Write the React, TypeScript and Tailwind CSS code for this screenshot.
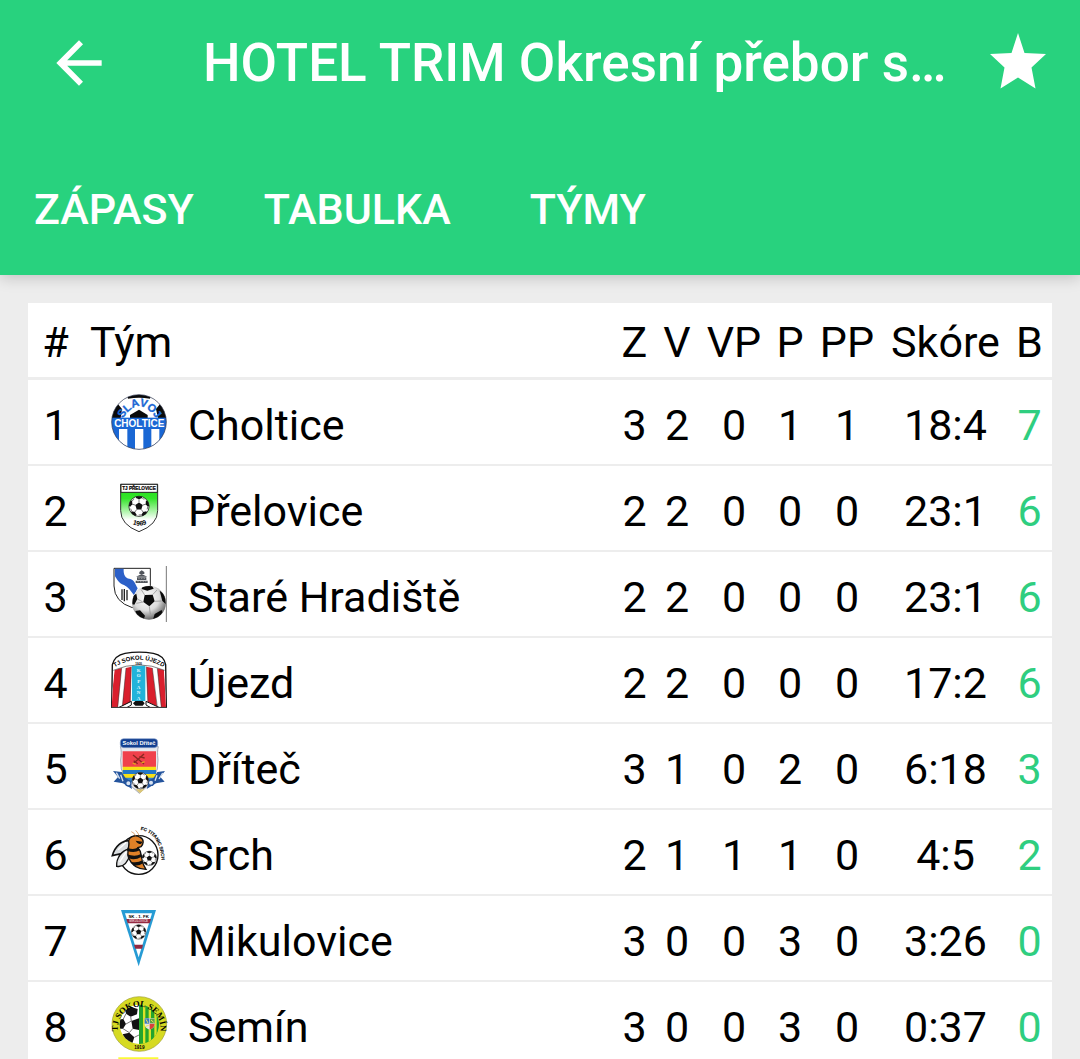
import type { ReactNode } from "react";

const angles = [0, 72, 144, 216, 288];

function Ball({ cx, cy, r }: { cx: number; cy: number; r: number }) {
  return (
    <g transform={`translate(${cx} ${cy}) scale(${r / 100})`}>
      <circle r="98" fill="#fff" stroke="#111" strokeWidth="7" />
      <path d="M0 -38 L36 -12 L22 31 L-22 31 L-36 -12 Z" fill="#111" />
      {angles.map((a) => (
        <g key={a} transform={`rotate(${a})`}>
          <path d="M0 -38 V-68" stroke="#333" strokeWidth="6" />
          <path d="M0 -68 L30 -80 L27 -95 Q0 -102 -27 -95 L-30 -80 Z" fill="#111" />
          <path d="M30 -80 L52 -66" stroke="#333" strokeWidth="6" />
        </g>
      ))}
    </g>
  );
}

function Crest({ viewBox, name, children }: { viewBox: string; name: string; children: ReactNode }) {
  return (
    <svg viewBox={viewBox} role="img" aria-label={name} className="block size-14 overflow-visible font-['Liberation_Sans',sans-serif] font-bold">
      {children}
    </svg>
  );
}

const choltice = (
  <Crest viewBox="33 27 168 168" name="Slavoj Choltice">
    <defs>
      <clipPath id="ch-c"><circle cx="117" cy="111" r="82" /></clipPath>
      <path id="ch-arc" d="M66 104 Q118 24 171 104" />
    </defs>
    <g clipPath="url(#ch-c)">
      <rect x="33" y="27" width="168" height="168" fill="#fff" />
      <path d="M80 24 H154 L150 41 Q117 35 84 41 Z M33 60 L52 55 L66 72 L62 100 H33 Z M201 60 L182 55 L168 72 L174 100 H201 Z" fill="#0a0a0a" />
      <path d="M117 74 L143 90 V104 H90 V90 Z" fill="#0a0a0a" />
      <rect x="33" y="98" width="168" height="97" fill="#1a67d4" />
      <path d="M57 132 H82 V200 H57 Z M105 132 H130 V200 H105 Z M154 132 H178 V200 H154 Z" fill="#fff" />
    </g>
    <circle cx="117" cy="111" r="82" fill="none" stroke="#27304a" strokeWidth="2" />
    <text fontSize="33" fill="#1a67d4" stroke="#1a67d4" strokeWidth="1"><textPath href="#ch-arc" startOffset="50%" textAnchor="middle">SLAVOJ</textPath></text>
    <text x="118" y="127" fontSize="30" fill="#fff" textAnchor="middle">CHOLTICE</text>
  </Crest>
);

const prelovice = (
  <Crest viewBox="33 24 168 168" name="TJ Přelovice">
    <defs>
      <linearGradient id="pr-g" x1="0" x2="0" y1="0" y2="1">
        <stop offset="0" stopColor="#1fdc16" />
        <stop offset=".3" stopColor="#35e52b" />
        <stop offset=".75" stopColor="#fff" />
      </linearGradient>
      <path id="pr-arc" d="M88 152 Q117 170 150 151" />
    </defs>
    <path d="M62 37 H173 V116 Q173 158 117 179 Q62 158 62 116 Z" fill="url(#pr-g)" stroke="#333" strokeWidth="3" />
    <rect x="63" y="37" width="109" height="24" fill="#fff" stroke="#222" strokeWidth="3" />
    <text x="117" y="55" fontSize="14" textAnchor="middle" stroke="#000" strokeWidth=".6">TJ PŘELOVICE</text>
    <Ball cx={117} cy={103} r={31} />
    <text fontSize="20"><textPath href="#pr-arc" startOffset="50%" textAnchor="middle">1969</textPath></text>
  </Crest>
);

const hradiste = (
  <Crest viewBox="33 24 168 168" name="Staré Hradiště">
    <defs>
      <radialGradient id="hr-g" cx=".42" cy=".35" r=".7">
        <stop offset="0" stopColor="#fff" />
        <stop offset=".55" stopColor="#dcdcdc" />
        <stop offset="1" stopColor="#555" />
      </radialGradient>
      <clipPath id="hr-c"><circle cx="147" cy="134" r="50" /></clipPath>
    </defs>
    <path d="M42 31 H151 V100 L97 149 Q43 132 42 84 Z" fill="#fff" stroke="#222" strokeWidth="3" />
    <path d="M45 32 H71 C70 50 76 60 88 62 C103 65 106 78 113 91 L102 112 C92 98 84 86 72 81 C55 76 50 61 45 55 Z" fill="#2c60c8" />
    <path d="M66 94 V126 M73 93 V130 M81 96 V127" stroke="#222" strokeWidth="4" />
    <path d="M107 68 H143 V75 H107 Z M111 58 H139 V66 H111 Z M108 56 L125 48 L142 56 Z M118 42 L125 37 L133 42 V48 H118 Z" fill="#50545b" />
    <path d="M115 61 H136 M112 71 H139" stroke="#bbb" strokeWidth="2" strokeDasharray="4 4" />
    <circle cx="147" cy="134" r="51" fill="url(#hr-g)" />
    <g clipPath="url(#hr-c)" fill="#0b0b0b">
      <path d="M134 111 L158 110 L164 130 L148 145 L130 132 Z" />
      <path d="M127 84 L156 83 L161 92 L142 98 L125 93 Z M179 98 L198 112 V139 L187 129 Z M95 115 L109 107 L112 123 L103 140 L96 139 Z M106 159 L120 157 L135 173 L130 187 L112 177 Z M164 168 L185 156 L188 165 L172 182 L159 184 Z" />
      <path d="M134 111 L123 94 M158 110 L171 96 M164 130 L184 129 M148 145 L151 169 M130 132 L109 136 M112 123 L127 131" fill="none" stroke="#888" strokeWidth="2" />
    </g>
    <path d="M199 24 V192" stroke="#777" strokeWidth="3" />
  </Crest>
);

const ujezd = (
  <Crest viewBox="33 24 168 168" name="TJ Sokol Újezd">
    <defs>
      <path id="uj-arc" d="M38 74 Q117 20 196 74" />
      <clipPath id="uj-c"><path d="M42 78 Q117 46 192 78 L198 190 H35 Z" /></clipPath>
    </defs>
    <path d="M35 190 L37 62 Q44 34 75 28 Q117 21 160 28 Q192 34 197 62 L199 190 Z" fill="#fff" stroke="#111" strokeWidth="4" />
    <g clipPath="url(#uj-c)">
      <rect x="33" y="50" width="168" height="145" fill="#fff" />
      <path d="M44 78 L65 72 L53 195 H30 Z M78 72 L94 68 L91 195 H66 Z M139 68 L157 72 L172 195 H144 Z M172 73 L192 78 L204 195 H184 Z" fill="#d91f2d" />
      <path d="M96 65 H136 V172 H96 Z" fill="#22b3da" />
      <path d="M65 72 L53 190 M78 72 L67 190 M94 68 L90 180 M139 68 L144 180 M157 72 L172 190 M172 73 L184 190" stroke="#333" strokeWidth="1.5" />
      <path d="M56 192 L96 171 H137 L182 192 Z" fill="#fff" />
      <path d="M53 192 L94 172 V183 L80 191 M181 192 L138 172 V183 L152 191" fill="none" stroke="#111" strokeWidth="3" />
      <path d="M99 178 L106 171 H128 L134 178 L128 185 H106 Z" fill="#111" />
    </g>
    <path d="M40 79 Q117 46 194 79" fill="none" stroke="#444" strokeWidth="2" />
    <text fontSize="18"><textPath href="#uj-arc" startOffset="50%" textAnchor="middle">TJ SOKOL ÚJEZD</textPath></text>
    <text x="116" y="62" fontSize="9" textAnchor="middle">1930</text>
    {["K", "O", "P", "A", "N", "A"].map((c, i) => (
      <text key={i} x="116" y={83 + i * 17} fontSize="15" textAnchor="middle" fill="#e4f8ff" className="font-['Liberation_Serif',serif]">{c}</text>
    ))}
    <path d="M33 190 H201" stroke="#555" strokeWidth="2" />
  </Crest>
);

const dritec = (
  <Crest viewBox="33 24 168 168" name="Sokol Dříteč">
    <path d="M61 50 H175 Q171 63 174 90 Q178 145 118 190 Q58 145 62 90 Q66 63 61 50 Z" fill="#e8e9ed" stroke="#a9adb8" strokeWidth="3" />
    <path d="M68 64 H168 V111 H68 Z" fill="#f0414b" />
    <path d="M68 110 H168 V143 Q164 151 158 156 H78 Q70 149 68 141 Z" fill="#f8e018" />
    <path d="M68 120 H168 V132 H68 Z" fill="#2278c9" />
    <path d="M72 143 H164 L151 157 H84 Z" fill="#3181c9" />
    <rect x="61" y="26" width="112" height="27" rx="10" fill="#123f91" stroke="#8aa1cc" strokeWidth="2" />
    <text x="117" y="46" fontSize="17" textAnchor="middle" fill="#fff">Sokol Dříteč</text>
    <path d="M99 75 L132 102 M132 72 L101 100 M118 80 L134 84 M101 92 L113 101" stroke="#8b2821" strokeWidth="4" />
    <path d="M124 99 L134 95 M98 99 L107 103" stroke="#e3a91d" strokeWidth="4" />
    <path d="M39 123 L65 126 L76 143 L91 153 L96 177 L69 160 L41 155 L54 141 Z M195 123 L172 126 L161 143 L147 153 L140 177 L168 160 L194 155 L181 141 Z" fill="#24549d" />
    <path d="M49 128 L59 146 M62 134 L69 154 M188 129 L177 147 M171 136 L165 152" stroke="#d5e0ee" strokeWidth="4" />
    <circle cx="85" cy="160" r="8" fill="#d8e3f2" stroke="#24549d" strokeWidth="4" />
    <circle cx="153" cy="158" r="8" fill="#d8e3f2" stroke="#24549d" strokeWidth="4" />
    <path d="M107 178 L120 190 L133 178 Z" fill="#dcc675" />
    <Ball cx={121} cy={152} r={25} />
  </Crest>
);

const srch = (
  <Crest viewBox="33 24 168 168" name="FC Titanic Srch">
    <defs><path id="sr-arc" d="M121 42 Q185 52 185 150" /></defs>
    <circle cx="116" cy="117" r="58" fill="#fff" stroke="#111" strokeWidth="4" />
    <text fontSize="14" stroke="#111" strokeWidth=".4"><textPath href="#sr-arc">FC TITANIC SRCH</textPath></text>
    <path d="M91 74 C66 72 45 91 37 119 L82 109 Z" fill="#d9dde0" stroke="#111" strokeWidth="5" />
    <path d="M86 99 C66 104 48 126 50 151 C71 155 84 136 90 116 Z" fill="#e3e5e6" stroke="#111" strokeWidth="4" />
    <path d="M79 79 L54 101 M79 107 L59 138" stroke="#fff" strokeWidth="4" />
    <path d="M86 75 C88 61 105 55 121 64 C134 72 130 85 123 92 L114 95 C128 110 121 121 127 132 Q128 146 138 160 C113 159 95 148 86 126 C78 107 91 92 86 75 Z" fill="#df8027" stroke="#111" strokeWidth="4" />
    <path d="M107 74 L128 77 L123 84 Q112 84 107 74 Z M84 96 Q101 103 115 94 L120 103 Q101 113 81 104 Z M81 115 Q106 124 123 114 L125 122 Q104 134 87 127 Z M92 137 Q112 142 128 132 L131 141 Q119 150 101 149 Z" fill="#111" />
    <path d="M107 61 Q104 50 94 47 M118 61 Q115 51 107 43" fill="none" stroke="#cc7a31" strokeWidth="2" />
    <Ball cx={148} cy={127} r={22} />
  </Crest>
);

const mikulovice = (
  <Crest viewBox="33 24 168 168" name="SK-1.FK Mikulovice">
    <path d="M63 24 H168 L116 193 Z" fill="#269bd4" />
    <path d="M75 34 H156 L116 166 Z" fill="#fff" />
    <path d="M79 51 H153 L149 64 H83 Z M102 128 H129 L126 140 H106 Z" fill="#932941" />
    <text x="116" y="48" fontSize="13" textAnchor="middle">SK - 1. FK</text>
    <text x="116" y="61" fontSize="9" textAnchor="middle" fill="#e6c6cd">MIKULOVICE</text>
    <Ball cx={116} cy={90} r={22} />
  </Crest>
);

const semin = (
  <Crest viewBox="33 36 168 168" name="TJ Sokol Semín">
    <defs>
      <path id="se-arc" d="M55 146 A64 64 0 1 1 180 146" />
      <clipPath id="se-c"><circle cx="118" cy="121" r="59" /></clipPath>
    </defs>
    <circle cx="118" cy="120" r="82" fill="#d6da22" stroke="#9e9e32" strokeWidth="2" />
    <g clipPath="url(#se-c)">
      <rect x="58" y="60" width="60" height="122" fill="#fff" />
      <path d="M76 76 L91 68 L113 75 L111 91 L92 98 L78 89 Z M56 107 L70 105 L78 120 L69 134 H56 Z M94 111 L117 103 V138 L98 134 Z M68 151 L88 146 L103 160 L97 178 L78 175 Z" fill="#111" />
      <path d="M92 98 L94 111 L78 120 M98 134 L88 146 L69 134 M78 89 L70 105 M103 160 L117 153" fill="none" stroke="#777" strokeWidth="3" />
      <path d="M117 60 H180 V182 H117 Z" fill="#23a42d" />
      <path d="M129 60 H136 V182 H129 Z M146 60 H153 V182 H146 Z M163 60 H170 V182 H163 Z" fill="#dae229" />
    </g>
    <path d="M134 103 H164 V122 Q163 132 149 137 Q135 132 134 122 Z" fill="#e6e6e0" />
    <path d="M134 103 H148 V119 H134 Z" fill="#397bc0" />
    <path d="M149 119 H164 Q163 132 149 137 Z" fill="#d9433a" />
    <path d="M150 104 H164 V118 H150 Z" fill="#59a645" />
    <path d="M138 106 L144 117 M137 127 L146 124 M153 108 L161 115" stroke="#eee25a" strokeWidth="3" />
    <text fontSize="26" className="font-['Liberation_Serif',serif]"><textPath href="#se-arc" startOffset="50%" textAnchor="middle">TJ SOKOL SEMÍN</textPath></text>
    <text x="118" y="195" fontSize="14" textAnchor="middle">1919</text>
    <path d="M55 220 H175 V226 H55 Z" fill="#fafa38" />
  </Crest>
);

const teams = [
  { name: "Choltice", crest: choltice, stats: ["3", "2", "0", "1", "1", "18:4"], points: "7" },
  { name: "Přelovice", crest: prelovice, stats: ["2", "2", "0", "0", "0", "23:1"], points: "6" },
  { name: "Staré Hradiště", crest: hradiste, stats: ["2", "2", "0", "0", "0", "23:1"], points: "6" },
  { name: "Újezd", crest: ujezd, stats: ["2", "2", "0", "0", "0", "17:2"], points: "6" },
  { name: "Dříteč", crest: dritec, stats: ["3", "1", "0", "2", "0", "6:18"], points: "3" },
  { name: "Srch", crest: srch, stats: ["2", "1", "1", "1", "0", "4:5"], points: "2" },
  { name: "Mikulovice", crest: mikulovice, stats: ["3", "0", "0", "3", "0", "3:26"], points: "0" },
  { name: "Semín", crest: semin, stats: ["3", "0", "0", "3", "0", "0:37"], points: "0" },
];

const tabs = ["ZÁPASY", "TABULKA", "TÝMY"];
const columns = ["Z", "V", "VP", "P", "PP", "Skóre", "B"];

export default function App() {
  return (
    <div className="flex h-screen flex-col bg-[#ededed] font-[Roboto,sans-serif] text-black">
      <header className="z-10 shrink-0 bg-[#28d27e] text-white shadow-[0_3px_14px_rgba(0,0,0,0.18)]">
        <div className="flex h-[126px] items-center pr-[34px] pl-[45px]">
          <button type="button" aria-label="Zpět" className="shrink-0">
            <svg viewBox="0 0 24 24" className="block size-[68px]" fill="currentColor">
              <path d="M20 11H7.83l5.59-5.59L12 4l-8 8 8 8 1.41-1.41L7.83 13H20z" />
            </svg>
          </button>
          <h1 className="ml-[90px] min-w-0 flex-1 truncate text-[53px] leading-[72px] font-medium">HOTEL TRIM Okresní přebor s…</h1>
          <button type="button" aria-label="Oblíbené" className="shrink-0">
            <svg viewBox="0 0 56 60" className="block h-15 w-14" fill="currentColor">
              <path d="M28 0 L34.5 20 L56 21 L41.5 34.5 L45.5 55.5 L28 44.5 L10.5 55.5 L14.5 34.5 L0 21 L21.5 20 Z" />
            </svg>
          </button>
        </div>
        <nav className="mt-[18px] flex h-[131px] gap-0.5">
          {tabs.map((t) => (
            <button key={t} type="button" className="min-w-[202px] px-[34px] text-[43px] font-medium">{t}</button>
          ))}
        </nav>
      </header>
      <main className="min-h-0 flex-1 overflow-y-auto px-7 pt-7 [scrollbar-width:none]">
        <table className="w-full table-fixed border-separate border-spacing-0 bg-white text-[43px] leading-[50px]">
          <colgroup>
            <col className="w-[55px]" />
            <col className="w-[105px]" />
            <col />
            <col className="w-[43px]" />
            <col className="w-[42px]" />
            <col className="w-[72px]" />
            <col className="w-[40px]" />
            <col className="w-[74px]" />
            <col className="w-[123px]" />
            <col className="w-[45px]" />
          </colgroup>
          <thead>
            <tr className="h-[77px] *:border-b-3 *:border-[#ededed] *:p-0 *:pt-1 *:font-normal">
              <th scope="col">#</th>
              <th scope="col" colSpan={2} className="text-left"><span className="pl-[7px]">Tým</span></th>
              {columns.map((c) => <th key={c} scope="col">{c}</th>)}
            </tr>
          </thead>
          <tbody>
            {teams.map((team, i) => (
              <tr key={team.name} className="h-[86px] *:border-b-2 *:border-[#ededed]">
                <td className="pt-1.5 text-center">{i + 1}</td>
                <td className="pl-7">{team.crest}</td>
                <td className="truncate pt-1.5">{team.name}</td>
                {team.stats.map((s, j) => <td key={j} className="pt-1.5 text-center">{s}</td>)}
                <td className="pt-1.5 text-center text-[#2fce80]">{team.points}</td>
              </tr>
            ))}
          </tbody>
        </table>
      </main>
    </div>
  );
}
